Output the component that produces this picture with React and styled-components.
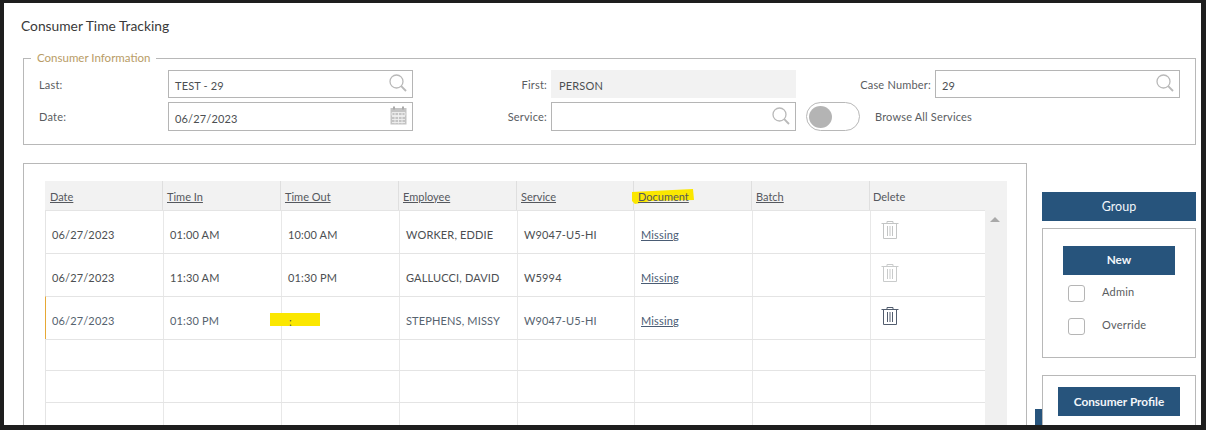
import React from "react";
import styled, { createGlobalStyle } from "styled-components";

const Global = createGlobalStyle`
  html, body { margin: 0; padding: 0; background: #1e1e1e; height: 430px; overflow: hidden; }
  * { box-sizing: border-box; }
  body { font-family: Lato, "Open Sans", sans-serif; }
`;

const Frame = styled.div`
  margin: 3px 5px 0 4px;
  height: 422px;
  background: #fff;
  overflow: hidden;
  padding: 0 5px 0 19px;
`;
const Title = styled.h1`
  margin: 0 0 0 -2px;
  padding-top: 14px;
  height: 48px;
  font-size: 13.8px;
  line-height: 17px;
  font-weight: 400;
  color: #3a3a3a;
`;
const Info = styled.fieldset`
  margin: 0;
  padding: 5px 15px 0;
  height: 94px;
  min-width: 0;
  width: 1173px;
  border: 1px solid #b8b8b8;
`;
const Legend = styled.legend`
  margin-left: -8px;
  padding: 0 6px;
  font-size: 11.5px;
  line-height: 14px;
  color: #b89c66;
`;
const FormGrid = styled.div`
  display: grid;
  grid-template-columns: 129px 245px 138px 245px 139px 245px;
  grid-template-rows: 28px 29px;
  row-gap: 4px;
  align-items: center;
`;
const Label = styled.label`
  font-size: 11px;
  letter-spacing: 0.2px;
  color: #5a5d61;
  text-align: ${(p) => (p.$right ? "right" : "left")};
  padding-right: ${(p) => (p.$right ? "4px" : "0")};
`;
const Field = styled.div`
  height: 100%;
  display: flex;
  align-items: center;
  justify-content: space-between;
  padding: 3px 5px 0 ${(p) => (p.$readonly ? "7px" : "6px")};
  border: 1px solid ${(p) => (p.$readonly ? "#f2f2f2" : "#b5b5b5")};
  background: ${(p) => (p.$readonly ? "#f2f2f2" : "#fff")};
  font-size: 11px;
  letter-spacing: 0.16px;
  color: #4c4f52;
`;
const FieldIcon = styled.svg`
  flex: none;
  margin-top: -5px;
`;
const ToggleCell = styled.div`
  grid-column: 5 / 7;
  display: flex;
  align-items: center;
  gap: 15px;
  padding-left: 10px;
`;
const Toggle = styled.div`
  width: 54px;
  height: 29px;
  border: 1px solid #b8b8b8;
  border-radius: 15px;
  padding: 3px 0 0 2px;
`;
const Knob = styled.div`
  width: 23px;
  height: 22px;
  border-radius: 50%;
  background: #b4b4b4;
`;
const ToggleText = styled.span`
  font-size: 11px;
  letter-spacing: 0.17px;
  color: #5a5d61;
`;
const Lower = styled.div`
  display: flex;
  align-items: flex-start;
  margin-top: 18px;
`;
const TablePanel = styled.section`
  width: 1004px;
  height: 300px;
  flex: none;
  border: 1px solid #b8b8b8;
  border-bottom: 0;
  padding: 17px 0 0 21px;
`;
const Table = styled.div`
  width: 962px;
`;
const HeadRow = styled.div`
  display: grid;
  grid-template-columns: 117px 118px 118px 118px 117px 118px 118px 138px;
  height: 29px;
  background: #f2f2f2;
`;
const HeadCell = styled.div`
  position: relative;
  display: flex;
  align-items: center;
  padding: 1px 0 0 ${(p) => (p.$first ? "5px" : p.$plain ? "3px" : "4px")};
  font-size: 11px;
  color: #55585e;
  border-left: ${(p) => (p.$first ? "0" : "1px solid #dfdfdf")};
  text-decoration: ${(p) => (p.$plain ? "none" : "underline")};
`;
const HeadText = styled.span`
  position: relative;
`;
const Mark = styled.svg`
  position: absolute;
  left: -3px;
  top: 8px;
`;
const BodyWrap = styled.div`
  display: flex;
  height: 240px;
`;
const Rows = styled.div`
  width: 940px;
  flex: none;
`;
const Row = styled.div`
  position: relative;
  display: grid;
  grid-template-columns: 117px 118px 118px 118px 117px 118px 118px 116px;
  height: ${(p) => p.$h}px;
  border-top: 1px solid #e4e4e4;
  border-left: 1px solid ${(p) => (p.$active ? "#e6a835" : "#e4e4e4")};
  font-size: 11px;
  color: ${(p) => (p.$active ? "#56636f" : "#4c4f52")};
`;
const Cell = styled.div`
  position: relative;
  padding: 17px 0 0 6px;
  line-height: 14px;
  letter-spacing: 0.15px;
  white-space: nowrap;
  border-left: ${(p) => (p.$first ? "0" : "1px solid #e8e8e8")};
`;
const DocLink = styled.a`
  color: #4a5c74;
  text-decoration: underline;
`;
const TrashCell = styled(Cell)`
  padding: 10px 0 0 10px;
`;
const Highlight = styled.div`
  position: absolute;
  left: -12px;
  top: 16px;
  width: 50px;
  height: 13px;
  background: #fbe700;
  color: #555;
  padding: 2px 0 0 19px;
  line-height: 14px;
`;
const Scrollbar = styled.div`
  width: 22px;
  flex: none;
  background: #f0f0f0;
  display: flex;
  justify-content: center;
  padding: 7px 2px 0 0;
`;
const ScrollArrow = styled.div`
  width: 0;
  height: 0;
  border-left: 5px solid transparent;
  border-right: 5px solid transparent;
  border-bottom: 5px solid #a9a9a9;
`;
const Side = styled.aside`
  width: 154px;
  flex: none;
  margin: 29px 0 0 15px;
  display: flex;
  flex-direction: column;
`;
const Button = styled.div`
  display: flex;
  align-items: center;
  justify-content: center;
  padding-bottom: 1px;
  background: #27547c;
  color: #f2f6fa;
  font-size: 12.5px;
  height: 29px;
`;
const NewButton = styled(Button)`
  padding-bottom: 2px;
  font-size: 11.8px;
  font-weight: 700;
`;
const ProfileButton = styled(Button)`
  padding-bottom: 0;
  font-size: 11.8px;
  font-weight: 700;
`;
const Box = styled.div`
  position: relative;
  border: 1px solid #b8b8b8;
  background: #fff;
`;
const GroupBox = styled(Box)`
  margin-top: 7px;
  height: 130px;
  padding: 17px 20px 0;
`;
const ProfileBox = styled(Box)`
  margin-top: 17px;
  height: 60px;
  padding: 11px 15px 0;
`;
const Peek = styled.div`
  position: absolute;
  left: -8px;
  top: 33px;
  width: 7px;
  height: 30px;
  background: #27547c;
`;
const CheckRow = styled.div`
  display: flex;
  align-items: center;
  gap: 17px;
  height: 17px;
  margin: ${(p) => p.$top}px 0 0 5px;
  font-size: 11px;
  letter-spacing: 0.2px;
  color: #5a5d61;
`;
const CheckText = styled.span`
  margin-top: -5px;
`;
const Check = styled.span`
  width: 17px;
  height: 17px;
  flex: none;
  border: 1px solid #b5b5b5;
  border-radius: 3px;
  background: #fff;
`;

const Search = () => (
  <FieldIcon width="18" height="18" viewBox="0 0 18 18" fill="none" stroke="#b9b9b9">
    <circle cx="7.5" cy="7.5" r="6.5" strokeWidth="1.3" />
    <path d="M12.2 12.2 L17 17" strokeWidth="1.9" />
  </FieldIcon>
);
const Calendar = () => (
  <FieldIcon width="17" height="19" viewBox="0 0 17 19">
    <rect x="0.5" y="2" width="16" height="16.5" fill="#c4c4c4" />
    <rect x="3" y="0.5" width="2" height="3" fill="#aaa" />
    <rect x="12" y="0.5" width="2" height="3" fill="#aaa" />
    <path
      d="M2 6.5h13v3h-13zM2 10.5h13M2 13.5h13M2 16.5h13M5 6.5v11M8.5 6.5v11M12 6.5v11"
      fill="none"
      stroke="#efefef"
      strokeWidth="0.9"
    />
  </FieldIcon>
);
const Trash = ({ color }) => (
  <svg width="18" height="18" viewBox="0 0 18 18" fill="none" stroke={color} strokeWidth="1">
    <path d="M0.5 2.5H17.5M6 2.5V0.5H12V2.5M2.5 2.5V17.5H15.5V2.5" />
    <path d="M6.5 5V15M9 5V15M11.5 5V15" />
  </svg>
);

const rows = [
  { d: "06/27/2023", i: "01:00 AM", o: "10:00 AM", e: "WORKER, EDDIE", s: "W9047-U5-HI", t: "#c3c5c5" },
  { d: "06/27/2023", i: "11:30 AM", o: "01:30 PM", e: "GALLUCCI, DAVID", s: "W5994", t: "#c9cbcb" },
  { d: "06/27/2023", i: "01:30 PM", o: null, e: "STEPHENS, MISSY", s: "W9047-U5-HI", t: "#525d6e", active: true },
];
const heads = ["Date", "Time In", "Time Out", "Employee", "Service", "Document", "Batch"];

export default function App() {
  return (
    <>
      <Global />
      <Frame>
        <Title>Consumer Time Tracking</Title>
        <Info>
          <Legend>Consumer Information</Legend>
          <FormGrid>
            <Label>Last:</Label>
            <Field>TEST - 29<Search /></Field>
            <Label $right>First:</Label>
            <Field $readonly>PERSON</Field>
            <Label $right>Case Number:</Label>
            <Field>29<Search /></Field>
            <Label>Date:</Label>
            <Field>06/27/2023<Calendar /></Field>
            <Label $right>Service:</Label>
            <Field><span /><Search /></Field>
            <ToggleCell>
              <Toggle><Knob /></Toggle>
              <ToggleText>Browse All Services</ToggleText>
            </ToggleCell>
          </FormGrid>
        </Info>
        <Lower>
          <TablePanel>
            <Table>
              <HeadRow>
                {heads.map((h, n) => (
                  <HeadCell key={h} $first={n === 0}>
                    {h === "Document" && (
                      <Mark width="64" height="16" viewBox="0 0 64 16">
                        <path d="M1 3 L62 0 L63 11 L20 12 L4 15 L1 12 Z" fill="#fbe700" />
                      </Mark>
                    )}
                    <HeadText>{h}</HeadText>
                  </HeadCell>
                ))}
                <HeadCell $plain>Delete</HeadCell>
              </HeadRow>
              <BodyWrap>
                <Rows>
                  {rows.map((r) => (
                    <Row key={r.e} $h={43} $active={r.active}>
                      <Cell $first>{r.d}</Cell>
                      <Cell>{r.i}</Cell>
                      <Cell>{r.o ?? <Highlight>:</Highlight>}</Cell>
                      <Cell>{r.e}</Cell>
                      <Cell>{r.s}</Cell>
                      <Cell><DocLink>Missing</DocLink></Cell>
                      <Cell />
                      <TrashCell><Trash color={r.t} /></TrashCell>
                    </Row>
                  ))}
                  {[31, 32, 32].map((h, n) => (
                    <Row key={n} $h={h}>
                      {Array.from({ length: 8 }, (_, c) => <Cell key={c} $first={c === 0} />)}
                    </Row>
                  ))}
                </Rows>
                <Scrollbar><ScrollArrow /></Scrollbar>
              </BodyWrap>
            </Table>
          </TablePanel>
          <Side>
            <Button>Group</Button>
            <GroupBox>
              <NewButton>New</NewButton>
              <CheckRow $top={10}><Check /><CheckText>Admin</CheckText></CheckRow>
              <CheckRow $top={16}><Check /><CheckText>Override</CheckText></CheckRow>
            </GroupBox>
            <ProfileBox>
              <Peek />
              <ProfileButton>Consumer Profile</ProfileButton>
            </ProfileBox>
          </Side>
        </Lower>
      </Frame>
    </>
  );
}
